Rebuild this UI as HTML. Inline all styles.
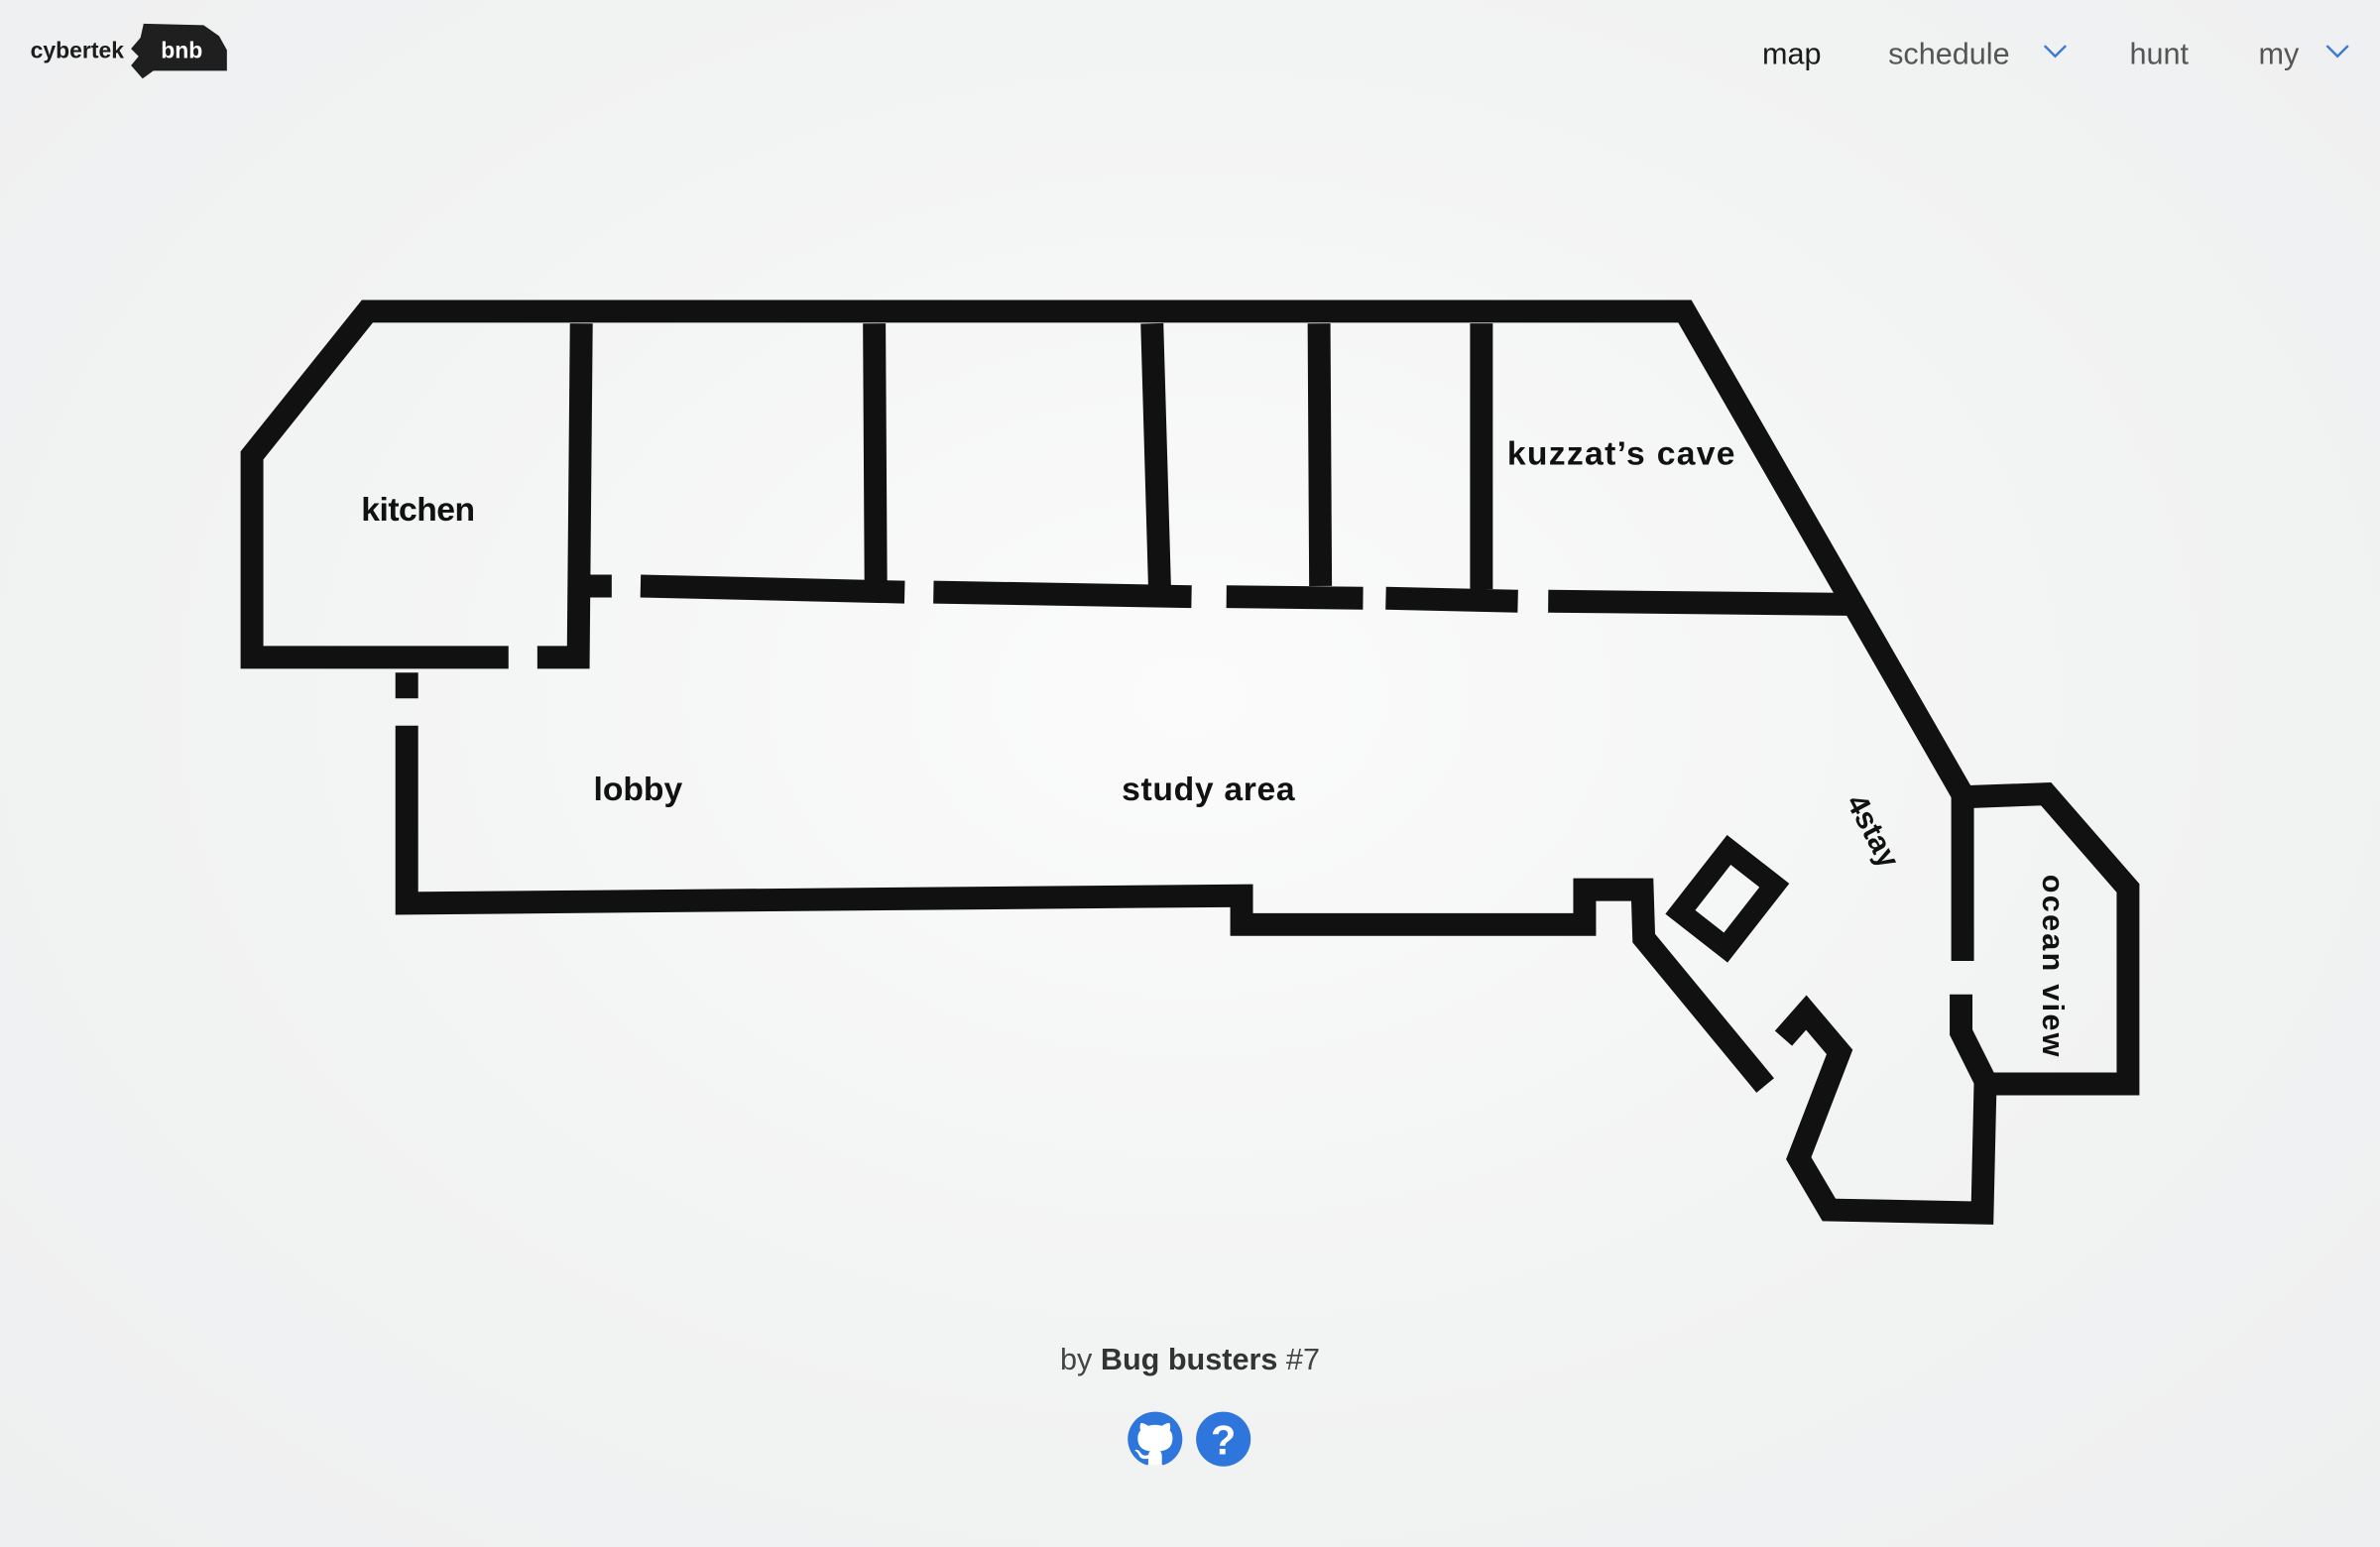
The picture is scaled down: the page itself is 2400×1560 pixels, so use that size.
<!DOCTYPE html>
<html><head><meta charset="utf-8"><style>
html,body{margin:0;padding:0;width:2400px;height:1560px;overflow:hidden;background:radial-gradient(ellipse at 50% 45%,#fbfbfb 0%,#f2f3f3 55%,#eeeff0 100%);}
svg{display:block}
</style></head><body>
<svg width="2400" height="1560" viewBox="0 0 1568 1019" xmlns="http://www.w3.org/2000/svg">
<!-- logo -->
<text x="20" y="38" font-family="Liberation Sans, sans-serif" font-weight="bold" font-size="15" fill="#1c1c1c">cybertek</text>
<path d="M144 24 L134 17 L95 16 L93 25 L87 32 L92 37 L87 43 L94 51 L101 46 L149 46 L149 33 Z" fill="#1f1f1f" stroke="#1f1f1f" stroke-width="1"/>
<text x="106" y="38" font-family="Liberation Sans, sans-serif" font-weight="bold" font-size="15" fill="#fff">bnb</text>
<!-- nav -->
<g font-family="Liberation Sans, sans-serif" font-size="20" fill="#555">
<text x="1161" y="42" fill="#1a1a1a">map</text>
<text x="1244" y="42">schedule</text>
<text x="1403" y="42">hunt</text>
<text x="1488" y="42">my</text>
</g>
<g fill="none" stroke="#3a7bd5" stroke-width="1.6">
<path d="M1347 30 L1354 37 L1361 30"/>
<path d="M1533 30 L1540 37 L1547 30"/>
</g>
<!-- map walls -->
<g fill="none" stroke="#111" stroke-width="15" stroke-linejoin="miter" stroke-miterlimit="10">
<path d="M1294 525 L1110 205 L242 205 L166 300 L166 433 L335 433"/>
<path d="M354 433 L381 433 L383 213"/>
<path d="M388 386 L403 386"/>
<path d="M422 386 L596 390"/>
<path d="M615 390 L785 393"/>
<path d="M808 393 L898 394"/>
<path d="M913 394 L1000 396"/>
<path d="M1020 396 L1218 398"/>
<path d="M576 213 L577 383"/>
<path d="M759 213 L764 386"/>
<path d="M869 213 L870 386"/>
<path d="M976 213 L976 388"/>
<path d="M1293 633 L1293 525 L1348 523 L1402 585 L1402 714 L1308 714"/>
<path d="M1292 655 L1292 680 L1308 712 L1306 799 L1205 797 L1185 763 L1212 693 L1190 667 L1175 684"/>
<path d="M268 443 L268 460"/>
<path d="M268 478 L268 595 L818 590 L818 609 L1044 609 L1044 586 L1082 586 L1083 618 L1163 715"/>
</g>
<g transform="translate(1138,592) rotate(38)">
<rect x="-19" y="-26" width="38" height="52" fill="none" stroke="#111" stroke-width="14"/>
</g>
<!-- labels -->
<g font-family="Liberation Sans, sans-serif" font-weight="bold" font-size="22" fill="#111">
<text x="238" y="343" textLength="75">kitchen</text>
<text x="993" y="306" textLength="150">kuzzat’s cave</text>
<text x="391" y="527">lobby</text>
<text x="739" y="527" textLength="114">study area</text>
<text transform="translate(1216,528) rotate(62)" font-size="20">4stay</text>
<text transform="translate(1346,576) rotate(90)" font-size="20" textLength="120">ocean view</text>
</g>
<!-- footer -->
<text x="784" y="902" text-anchor="middle" font-family="Liberation Sans, sans-serif" font-size="20" fill="#444">by <tspan font-weight="bold" fill="#333">Bug busters</tspan> #7</text>
<circle cx="761" cy="948" r="17" fill="#fff"/>
<g transform="translate(743,930) scale(2.25)">
<path fill="#2f76dc" d="M8 0C3.58 0 0 3.58 0 8c0 3.54 2.29 6.53 5.47 7.59.4.07.55-.17.55-.38 0-.19-.01-.82-.01-1.490-2.01.37-2.53-.49-2.69-.94-.09-.23-.48-.94-.82-1.13-.28-.15-.68-.52-.01-.53.63-.01 1.08.58 1.23.82.72 1.21 1.870.87 2.330.66.07-.52.28-.87.51-1.07-1.78-.2-3.64-.89-3.64-3.95 0-.87.31-1.59.82-2.15-.08-.2-.36-1.020.08-2.12 0 0 .67-.21 2.2.82.64-.18 1.32-.27 2-.27.68 0 1.36.09 2 .27 1.53-1.04 2.2-.82 2.2-.82.44 1.1.16 1.92.08 2.12.51.56.82 1.27.82 2.15 0 3.07-1.87 3.75-3.65 3.95.29.25.54.73.54 1.48 0 1.07-.01 1.93-.01 2.2 0 .21.15.46.55.38A8.013 8.013 0 0016 8c0-4.42-3.58-8-8-8z"/>
</g>
<circle cx="806" cy="948" r="18" fill="#2f76dc"/>
<text x="806" y="958" text-anchor="middle" font-family="Liberation Sans, sans-serif" font-weight="bold" font-size="27" fill="#fff">?</text>
</svg>
</body></html>
